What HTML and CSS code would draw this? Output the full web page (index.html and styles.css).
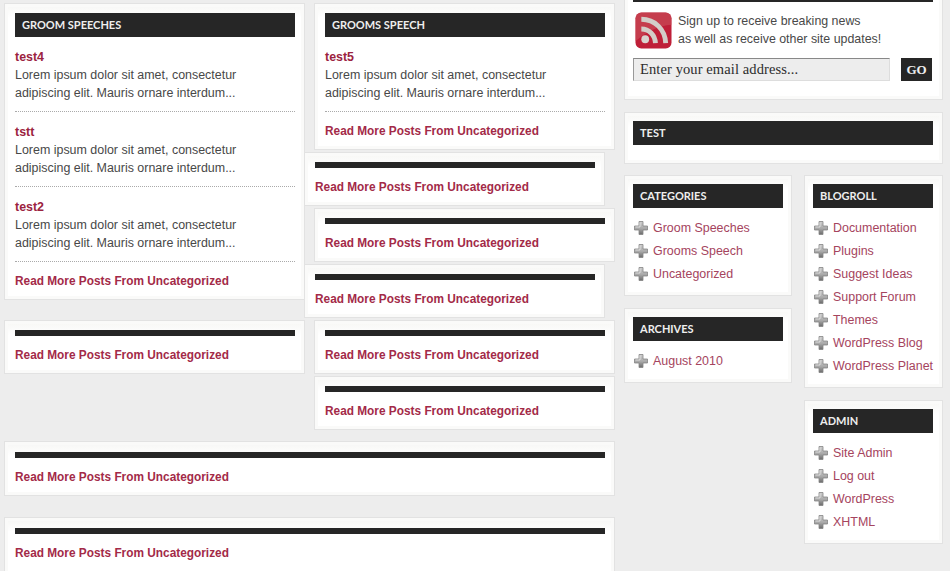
FILE: index.html
```html
<!DOCTYPE html>
<html lang="en">
<head>
    <meta charset="UTF-8">
    <meta name="viewport" content="width=device-width, initial-scale=1.0">
    <title>Groom Speeches</title>
    <link rel="stylesheet" href="styles.css">
</head>
<body>
    <svg class="sprites" width="0" height="0" aria-hidden="true">
        <defs>
            <linearGradient id="plusFill" x1="0" y1="0" x2="0" y2="1">
                <stop offset="0" stop-color="#cfcfcf"/>
                <stop offset="0.55" stop-color="#a8a8a8"/>
                <stop offset="1" stop-color="#6a6a6a"/>
            </linearGradient>
            <symbol id="plus" viewBox="0 0 14 14">
                <path d="M5 .5h4v4.500h4.500v4H9v4.500H5V9H.5V5H5z" fill="url(#plusFill)" stroke="#858585" stroke-width=".8" stroke-linejoin="round"/>
                <path d="M6 1.500v4.500H1.500" fill="none" stroke="#e6e6e6" stroke-width=".8"/>
            </symbol>
        </defs>
    </svg>

    <div class="page">
        <div class="main">
            <div class="columns">
                <div class="col">
                    <div class="card">
                        <h3 class="bar">Groom Speeches</h3>
                        <div class="post">
                            <a class="post-title" href="#">test4</a>
                            <p>Lorem ipsum dolor sit amet, consectetur adipiscing elit. Mauris ornare interdum...</p>
                        </div>
                        <div class="post">
                            <a class="post-title" href="#">tstt</a>
                            <p>Lorem ipsum dolor sit amet, consectetur adipiscing elit. Mauris ornare interdum...</p>
                        </div>
                        <div class="post">
                            <a class="post-title" href="#">test2</a>
                            <p>Lorem ipsum dolor sit amet, consectetur adipiscing elit. Mauris ornare interdum...</p>
                        </div>
                        <a class="more" href="#">Read More Posts From Uncategorized</a>
                    </div>
                    <div class="card short">
                        <div class="bar empty"></div>
                        <a class="more" href="#">Read More Posts From Uncategorized</a>
                    </div>
                </div>
                <div class="col">
                    <div class="card">
                        <h3 class="bar">Grooms Speech</h3>
                        <div class="post">
                            <a class="post-title" href="#">test5</a>
                            <p>Lorem ipsum dolor sit amet, consectetur adipiscing elit. Mauris ornare interdum...</p>
                        </div>
                        <a class="more" href="#">Read More Posts From Uncategorized</a>
                    </div>
                    <div class="card short shifted">
                        <div class="bar empty"></div>
                        <a class="more" href="#">Read More Posts From Uncategorized</a>
                    </div>
                    <div class="card short">
                        <div class="bar empty"></div>
                        <a class="more" href="#">Read More Posts From Uncategorized</a>
                    </div>
                    <div class="card short shifted">
                        <div class="bar empty"></div>
                        <a class="more" href="#">Read More Posts From Uncategorized</a>
                    </div>
                    <div class="card short">
                        <div class="bar empty"></div>
                        <a class="more" href="#">Read More Posts From Uncategorized</a>
                    </div>
                    <div class="card short">
                        <div class="bar empty"></div>
                        <a class="more" href="#">Read More Posts From Uncategorized</a>
                    </div>
                </div>
            </div>
            <div class="card short wide">
                <div class="bar empty"></div>
                <a class="more" href="#">Read More Posts From Uncategorized</a>
            </div>
            <div class="card short wide">
                <div class="bar empty"></div>
                <a class="more" href="#">Read More Posts From Uncategorized</a>
            </div>
        </div>

        <div class="sidebar">
            <div class="card subscribe">
                <div class="bar"></div>
                <div class="signup">
                    <svg class="rss" viewBox="0 0 38 38" aria-hidden="true">
                        <rect x=".5" y=".5" width="37" height="37" rx="6" fill="#bf1f38"/>
                        <path d="M.5 7a6.500 6.500 0 0 1 6.500-6.500h24A6.500 6.500 0 0 1 37.500 7v6C24 14 12 20 .5 30z" fill="#c9525c" opacity=".6"/>
                        <circle cx="10.500" cy="28" r="4" fill="#d9d4cf"/>
                        <path d="M6.500 17.500c8 0 14 6 14.500 14.500" fill="none" stroke="#d3cdc8" stroke-width="5"/>
                        <path d="M6.500 7.500c14 0 24.500 10.500 25 24.500" fill="none" stroke="#d3cdc8" stroke-width="5"/>
                    </svg>
                    <p>Sign up to receive breaking news<br>as well as receive other site updates!</p>
                </div>
                <form class="email-form">
                    <input class="email" type="text" value="Enter your email address...">
                    <button class="go" type="button">GO</button>
                </form>
            </div>
            <div class="card test">
                <h3 class="bar">Test</h3>
            </div>
            <div class="widgets">
                <div class="widget-col narrow">
                    <div class="card">
                        <h3 class="bar">Categories</h3>
                        <ul class="links">
                            <li><svg class="plus"><use href="#plus"/></svg><a href="#">Groom Speeches</a></li>
                            <li><svg class="plus"><use href="#plus"/></svg><a href="#">Grooms Speech</a></li>
                            <li><svg class="plus"><use href="#plus"/></svg><a href="#">Uncategorized</a></li>
                        </ul>
                    </div>
                    <div class="card">
                        <h3 class="bar">Archives</h3>
                        <ul class="links">
                            <li><svg class="plus"><use href="#plus"/></svg><a href="#">August 2010</a></li>
                        </ul>
                    </div>
                </div>
                <div class="widget-col">
                    <div class="card">
                        <h3 class="bar">Blogroll</h3>
                        <ul class="links">
                            <li><svg class="plus"><use href="#plus"/></svg><a href="#">Documentation</a></li>
                            <li><svg class="plus"><use href="#plus"/></svg><a href="#">Plugins</a></li>
                            <li><svg class="plus"><use href="#plus"/></svg><a href="#">Suggest Ideas</a></li>
                            <li><svg class="plus"><use href="#plus"/></svg><a href="#">Support Forum</a></li>
                            <li><svg class="plus"><use href="#plus"/></svg><a href="#">Themes</a></li>
                            <li><svg class="plus"><use href="#plus"/></svg><a href="#">WordPress Blog</a></li>
                            <li><svg class="plus"><use href="#plus"/></svg><a href="#">WordPress Planet</a></li>
                        </ul>
                    </div>
                    <div class="card">
                        <h3 class="bar">Admin</h3>
                        <ul class="links">
                            <li><svg class="plus"><use href="#plus"/></svg><a href="#">Site Admin</a></li>
                            <li><svg class="plus"><use href="#plus"/></svg><a href="#">Log out</a></li>
                            <li><svg class="plus"><use href="#plus"/></svg><a href="#">WordPress</a></li>
                            <li><svg class="plus"><use href="#plus"/></svg><a href="#">XHTML</a></li>
                        </ul>
                    </div>
                </div>
            </div>
        </div>
    </div>
</body>
</html>
```
FILE: styles.css
```css
html {
    overflow: hidden;
}

body {
    margin: 0;
    height: 571px;
    overflow: hidden;
    background-color: #ededed;
    font-family: 'Liberation Sans', Arial, sans-serif;
    font-size: 12.45px;
    line-height: 18px;
    color: #484848;
}

a {
    text-decoration: none;
}

.sprites {
    display: block;
}

.page {
    display: flex;
    gap: 9px;
    padding: 3px 0 0 4px;
}

.main {
    width: 611px;
    flex: none;
}

.columns {
    display: flex;
    gap: 9px;
}

.col {
    width: 301px;
}

.card {
    box-sizing: border-box;
    background: linear-gradient(#f6f6f4, #fff 14px);
    border: 1px solid #e2e2e2;
    box-shadow: inset 0 0 0 3px #fafaf9;
    padding: 9px 9px 9px 10px;
}

.col > .card + .card {
    margin-top: 2px;
}

.col:first-child > .card + .card {
    margin-top: 20px;
}

.short {
    height: 54px;
}

.shifted {
    width: 301px;
    margin-left: -10px;
}

.wide {
    height: 55px;
    margin-top: 11px;
    padding-top: 10px;
}

.wide + .wide {
    margin-top: 21px;
    height: 70px;
}

.bar {
    margin: 0;
    height: 24px;
    padding: 0 7px;
    background-color: #262626;
    color: #eee;
    font-family: Lato, 'Liberation Sans', sans-serif;
    font-size: 11px;
    font-weight: bold;
    line-height: 24px;
    text-transform: uppercase;
}

.bar.empty {
    height: 6px;
}

.post {
    padding: 11px 0 9px;
    border-bottom: 1px dotted #aaa;
}

.post-title {
    display: block;
    color: #9b2340;
    font-weight: bold;
}

.post p {
    margin: 0;
    padding-right: 30px;
}

.more {
    display: block;
    margin-top: 10px;
    color: #a32a48;
    font-size: 11.85px;
    font-weight: bold;
}

.sidebar {
    width: 319px;
    flex: none;
}

.sidebar .card {
    padding: 8px 9px 10px 8px;
}

.subscribe {
    margin-top: -34px;
    height: 131px;
}

.signup {
    display: flex;
    gap: 6px;
    margin: 10px 0 0 2px;
}

.signup p {
    margin: 0;
    font-size: 12.4px;
}

.rss {
    width: 37px;
    height: 37px;
    flex: none;
}

.email-form {
    display: flex;
    justify-content: space-between;
    margin-top: 9px;
    padding-right: 1px;
}

.email {
    box-sizing: border-box;
    width: 257px;
    height: 23px;
    padding: 0 6px;
    background-color: #ededed;
    border: 1px solid #ddd;
    border-top-color: #888;
    border-left-color: #999;
    font-family: 'Liberation Serif', serif;
    font-size: 14.5px;
    letter-spacing: .1px;
    color: #2c2c2c;
}

.go {
    width: 31px;
    height: 23px;
    padding: 0;
    background-color: #262626;
    border: none;
    color: #eee;
    font-family: 'Liberation Serif', serif;
    font-size: 13px;
    font-weight: bold;
}

.test {
    margin-top: 12px;
    height: 52px;
}

.widgets {
    display: flex;
    gap: 12px;
    margin-top: 11px;
}

.widget-col {
    display: flex;
    flex-direction: column;
    gap: 12px;
    width: 139px;
}

.narrow {
    width: 168px;
}

.sidebar .narrow .card {
    padding-right: 8px;
}

.links {
    list-style: none;
    margin: 8px 0 0;
    padding: 0;
}

.links li {
    display: flex;
    align-items: center;
    gap: 5px;
    height: 23px;
    padding-left: 1px;
    white-space: nowrap;
}

.links a {
    color: #a5445e;
}

.plus {
    width: 14px;
    height: 14px;
    flex: none;
}
```
